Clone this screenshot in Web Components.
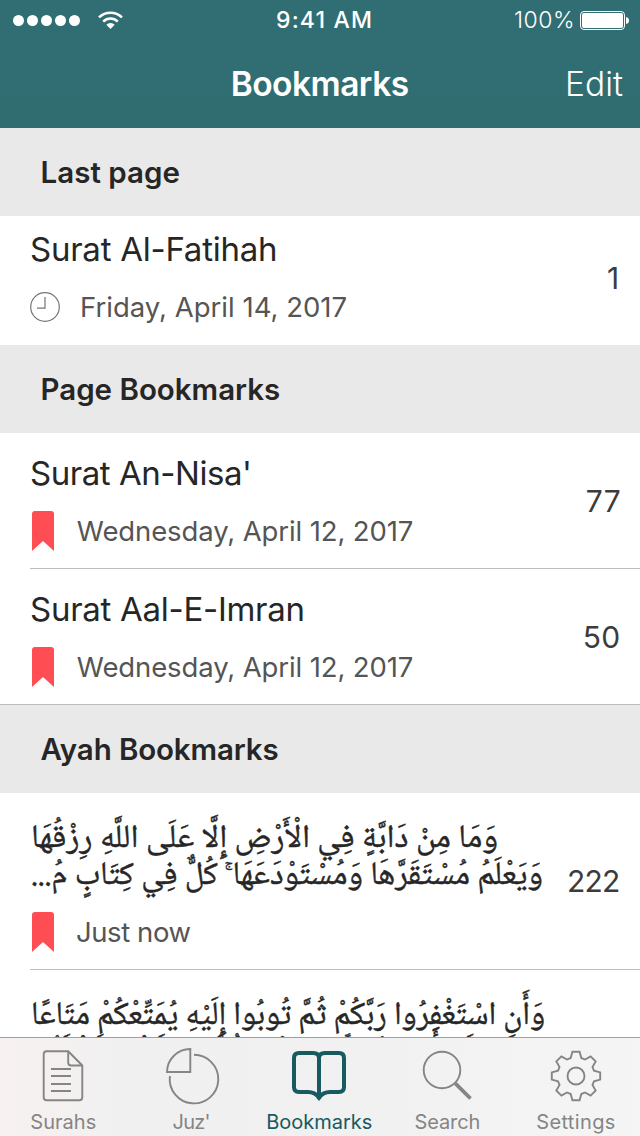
<!DOCTYPE html>
<html lang="en">
<head>
<meta charset="utf-8">
<title>Bookmarks</title>
<style>
html,body{margin:0;padding:0}
body{width:640px;height:1136px;overflow:hidden;background:#fff;font-family:Inter,"Liberation Sans",sans-serif;color:#262626}
</style>
</head>
<body>
<quran-app></quran-app>
<script>
const define=(name,html,after)=>{
  const t=document.createElement('template');t.innerHTML=html;
  customElements.define(name,class extends HTMLElement{
    connectedCallback(){
      if(this.shadowRoot)return;
      this.attachShadow({mode:'open'}).append(t.content.cloneNode(true));
      if(after)after.call(this,this.shadowRoot);
    }
  });
};
const ctx=document.createElement('canvas').getContext('2d');

/* Single line of text whose ink spans exactly its box width; dx nudges it sideways. */
define('fit-text',`<style>:host{display:block;white-space:nowrap;flex:none}span{display:inline-block;white-space:pre}</style><span></span>`,function(r){
  const s=r.querySelector('span'),w=+this.getAttribute('w'),dx=+(this.getAttribute('dx')||0),text=this.getAttribute('text');
  s.textContent=text;
  const cs=getComputedStyle(this);
  ctx.font=`${cs.fontWeight} ${cs.fontSize} ${cs.fontFamily}`;
  this.style.width=w+'px';
  if(this.hasAttribute('rtl')){
    s.dir='rtl';
    s.style.transformOrigin='0 50%';
    s.style.transform=`scaleX(${(w+2)/s.getBoundingClientRect().width})`;
    return;
  }
  const m=ctx.measureText(text);
  const ink=m.actualBoundingBoxRight+m.actualBoundingBoxLeft;
  s.style.letterSpacing=(text.length>1?(w-ink)/(text.length-1):0)+'px';
  s.style.marginLeft=(m.actualBoundingBoxLeft+dx)+'px';
});

define('status-bar',`<style>
:host{display:flex;height:40px;align-items:center;color:#fff;font-size:23px;line-height:41px}
.l{width:277px}.l svg{display:block}.t{font-weight:500;width:238px}
.p{font-weight:300}.b{margin-left:7px;display:block}
</style>
<div class="l"><svg width="140" height="40" fill="#fff"><circle cx="18.5" cy="20.5" r="5.5"/><circle cx="32.5" cy="20.5" r="5.5"/><circle cx="46.5" cy="20.5" r="5.5"/><circle cx="60.5" cy="20.5" r="5.5"/><circle cx="74.5" cy="20.5" r="5.5"/>
<path d="M110.5 29l-4.2-4.2a6 6 0 0 1 8.4 0z"/><g fill="none" stroke="#fff" stroke-width="2.5"><path d="M103.2 21.6a10.4 10.4 0 0 1 14.6 0"/><path d="M99 17.3a16.6 16.6 0 0 1 23 0"/></g></svg></div>
<div class="t"><fit-text w="94" text="9:41 AM"></fit-text></div>
<fit-text class="p" w="58" text="100%"></fit-text>
<svg class="b" width="52" height="40" fill="#fff"><rect x=".5" y="11.5" width="44" height="18" rx="3.5" fill="none" stroke="#fff"/><rect x="2" y="13" width="41" height="15" rx="2"/><path d="M46 17q3 .5 3 3.5t-3 3.5z"/></svg>`);

define('nav-bar',`<style>
:host{display:block;height:128px;background:linear-gradient(#316e74,#306e73 60%,#2f6d70)}
.n{display:grid;grid-template-columns:232px 336px 1fr;height:88px;align-items:center;color:#fff;font-size:33.5px;line-height:89px}
.t{font-weight:600}.e{font-weight:300}
</style><status-bar></status-bar>
<div class="n"><i></i><fit-text class="t" w="176" dx=".7" text="Bookmarks"></fit-text><fit-text class="e" w="55" text="Edit"></fit-text></div>`);

define('section-head',`<style>:host{display:block;height:88px;box-sizing:border-box;padding-left:42px;background:#e9e9e9;font-size:29.5px;font-weight:600;line-height:89px;color:#262626}</style><slot></slot>`);

define('bookmark-row',`<style>
:host{display:flex;position:relative;box-sizing:border-box;height:136px;padding:20px 20px 0 32px;justify-content:space-between}
:host([kind=last]){height:129px;padding-top:13px}
:host([kind=ayah]){height:177px;padding-top:23px}
:host::after{content:"";position:absolute;left:30px;right:0;bottom:0;height:1px;background:#bcbcc0}
:host([end])::after{left:0}:host([kind=last])::after{display:none}
.main{display:flex;flex-direction:column}
.title{display:block;font-size:33px;line-height:40px;height:40px}
:host([kind=ayah]) .title{height:96px}
.date{display:flex;align-items:center;height:40px;margin-top:18px;font-size:27.5px;line-height:41px;color:#555}
:host([kind=ayah]) .date{margin-top:0}
svg{display:block;width:23px;height:40px;margin-right:22px}
.clock{display:none}
:host([kind=last]) .mark{display:none}:host([kind=last]) .clock{display:block;width:30px;height:30px;margin:0 22px 0 -2px}
.num{font-size:30px;line-height:97px;color:#3c3c3c;font-weight:400}
:host([kind=last]) .num{line-height:98px}
:host([kind=ayah]) .num{line-height:131px}
</style>
<div class="main"><div class="title"><slot name="title"></slot></div>
<div class="date"><svg class="mark" viewBox="0 0 23 40"><path d="M0 40V3q0-3 3-3h16q3 0 3 3v37L11 30z" fill="#ff4e53"/></svg>
<svg class="clock" viewBox="0 0 30 30" fill="none" stroke="#757575" stroke-width="1.2"><circle cx="15" cy="15" r="14.3"/><path d="M15 5v11.2H7"/></svg><slot name="date"></slot></div></div>
<div class="num"><slot name="num"></slot></div>`);

define('ayah-text',`<style>:host{display:block;height:90px;padding-top:6px;font-family:"Noto Naskh Arabic","Noto Sans Arabic","DejaVu Sans",sans-serif;font-size:32.5px;line-height:37px;color:#262626;margin-left:-1px;-webkit-text-stroke:.45px #262626}</style><slot></slot>`);

define('tab-item',`<style>
:host{display:flex;flex-direction:column;align-items:center;color:#858585;font-size:20px;line-height:24px}
:host([on]){color:#175a60}
svg{display:block;width:128px;height:72px;fill:none;stroke:currentColor;stroke-width:1.9}
</style><svg></svg><slot></slot>`,function(r){
  const kind=this.getAttribute('icon'),svg=r.querySelector('svg');
  let tooth='';
  for(let i=0;i<8;i++){
    const a=i*Math.PI/4,c=Math.cos(a),s=Math.sin(a);
    for(const [x,y] of [[-5.3,-18],[-3.6,-24.2],[3.6,-24.2],[5.3,-18]])tooth+=(tooth?'L':'M')+(64+x*c-y*s).toFixed(2)+' '+(38+x*s+y*c).toFixed(2);
  }
  svg.innerHTML={
    doc:'<path d="M68.2 13.3H46.7q-3 0-3 3v43q0 3 3 3h32.6q3 0 3-3V27.5zv11.2q0 3 3 3h11.1M51 31h20M51 38h20M51 46h20M51 53h20"/>',
    pie:'<path d="M62.3 11v23H39A23.3 23.3 0 0 1 62.3 11zM66 16.8A24.3 24.3 0 1 1 41.9 38"/>',
    book:'<path stroke-width="4" d="M63 59.500C60 55.500 57 54 52 54h-9q-5 0-5-5V20q0-5 5-5h14q6 0 6 5zM63 59.500C66 55.500 69 54 74 54h9q5 0 5-5V20q0-5-5-5H69q-6 0-6 5z" stroke-linejoin="round"/><path d="M60.500 60h5L63 63z" fill="currentColor" stroke="none"/>',
    search:'<circle cx="58" cy="32" r="18.3"/><path stroke-width="3.8" d="M71.3 45.3L86.5 60.5"/>',
    gear:`<path d="${tooth}z"/><circle cx="64" cy="38" r="8.5"/>`
  }[kind];
});

define('tab-bar',`<style>
:host{display:grid;grid-template-columns:repeat(5,128px);height:99px;box-sizing:border-box;border-top:1px solid #a0a0a0;background:linear-gradient(90deg,#f7f1f0,#f0f0f0 22%,#f1f1f1 60%,#f5f5f5);position:relative}
</style><slot></slot>`);

define('quran-app',`<style>
:host{display:flex;flex-direction:column;width:640px;height:1136px;overflow:hidden;background:#fff}
main{flex:1;min-height:0;overflow:hidden}nav-bar,tab-bar{flex:none}
</style>
<nav-bar></nav-bar>
<main>
<section-head><fit-text w="137" dx=".5" text="Last page"></fit-text></section-head>
<bookmark-row kind="last"><fit-text slot="title" w="244" dx="-1" text="Surat Al-Fatihah"></fit-text><fit-text slot="date" w="264.5" text="Friday, April 14, 2017"></fit-text><fit-text slot="num" w="11" dx="-1" text="1"></fit-text></bookmark-row>
<section-head><fit-text w="236.5" dx=".5" text="Page Bookmarks"></fit-text></section-head>
<bookmark-row><fit-text slot="title" w="218" dx="-1" text="Surat An-Nisa'"></fit-text><fit-text slot="date" w="336" dx="-.2" text="Wednesday, April 12, 2017"></fit-text><fit-text slot="num" w="33" dx="-.2" text="77"></fit-text></bookmark-row>
<bookmark-row end><fit-text slot="title" w="271.5" dx="-1" text="Surat Aal-E-Imran"></fit-text><fit-text slot="date" w="336" dx="-.2" text="Wednesday, April 12, 2017"></fit-text><fit-text slot="num" w="34.5" dx="-.7" text="50"></fit-text></bookmark-row>
<section-head><fit-text w="237" dx="-1.5" text="Ayah Bookmarks"></fit-text></section-head>
<bookmark-row kind="ayah"><ayah-text slot="title"><fit-text rtl w="465" text="وَمَا مِنْ دَابَّةٍ فِي الْأَرْضِ إِلَّا عَلَى اللَّهِ رِزْقُهَا"></fit-text><fit-text rtl w="510" text="وَيَعْلَمُ مُسْتَقَرَّهَا وَمُسْتَوْدَعَهَا ۚ كُلٌّ فِي كِتَابٍ مُ..."></fit-text></ayah-text><fit-text slot="date" w="113.5" text="Just now"></fit-text><fit-text slot="num" w="50" dx="-1" text="222"></fit-text></bookmark-row>
<bookmark-row kind="ayah"><ayah-text slot="title"><fit-text rtl w="512" text="وَأَنِ اسْتَغْفِرُوا رَبَّكُمْ ثُمَّ تُوبُوا إِلَيْهِ يُمَتِّعْكُمْ مَتَاعًا"></fit-text><fit-text rtl w="511" text="حَسَنًا إِلَىٰ أَجَلٍ مُسَمًّى وَيُؤْتِ كُلَّ ذِي فَضْلٍ فَضْلَهُ..."></fit-text></ayah-text></bookmark-row>
</main>
<tab-bar>
<tab-item icon="doc"><fit-text w="64.5" text="Surahs" dx="-.5"></fit-text></tab-item>
<tab-item icon="pie"><fit-text w="36" dx="-1.5" text="Juz'"></fit-text></tab-item>
<tab-item icon="book" on><fit-text w="104.5" dx="-.5" text="Bookmarks"></fit-text></tab-item>
<tab-item icon="search"><fit-text w="64" dx="-.5" text="Search"></fit-text></tab-item>
<tab-item icon="gear"><fit-text w="77.5" text="Settings"></fit-text></tab-item>
</tab-bar>`);
</script>
</body>
</html>
